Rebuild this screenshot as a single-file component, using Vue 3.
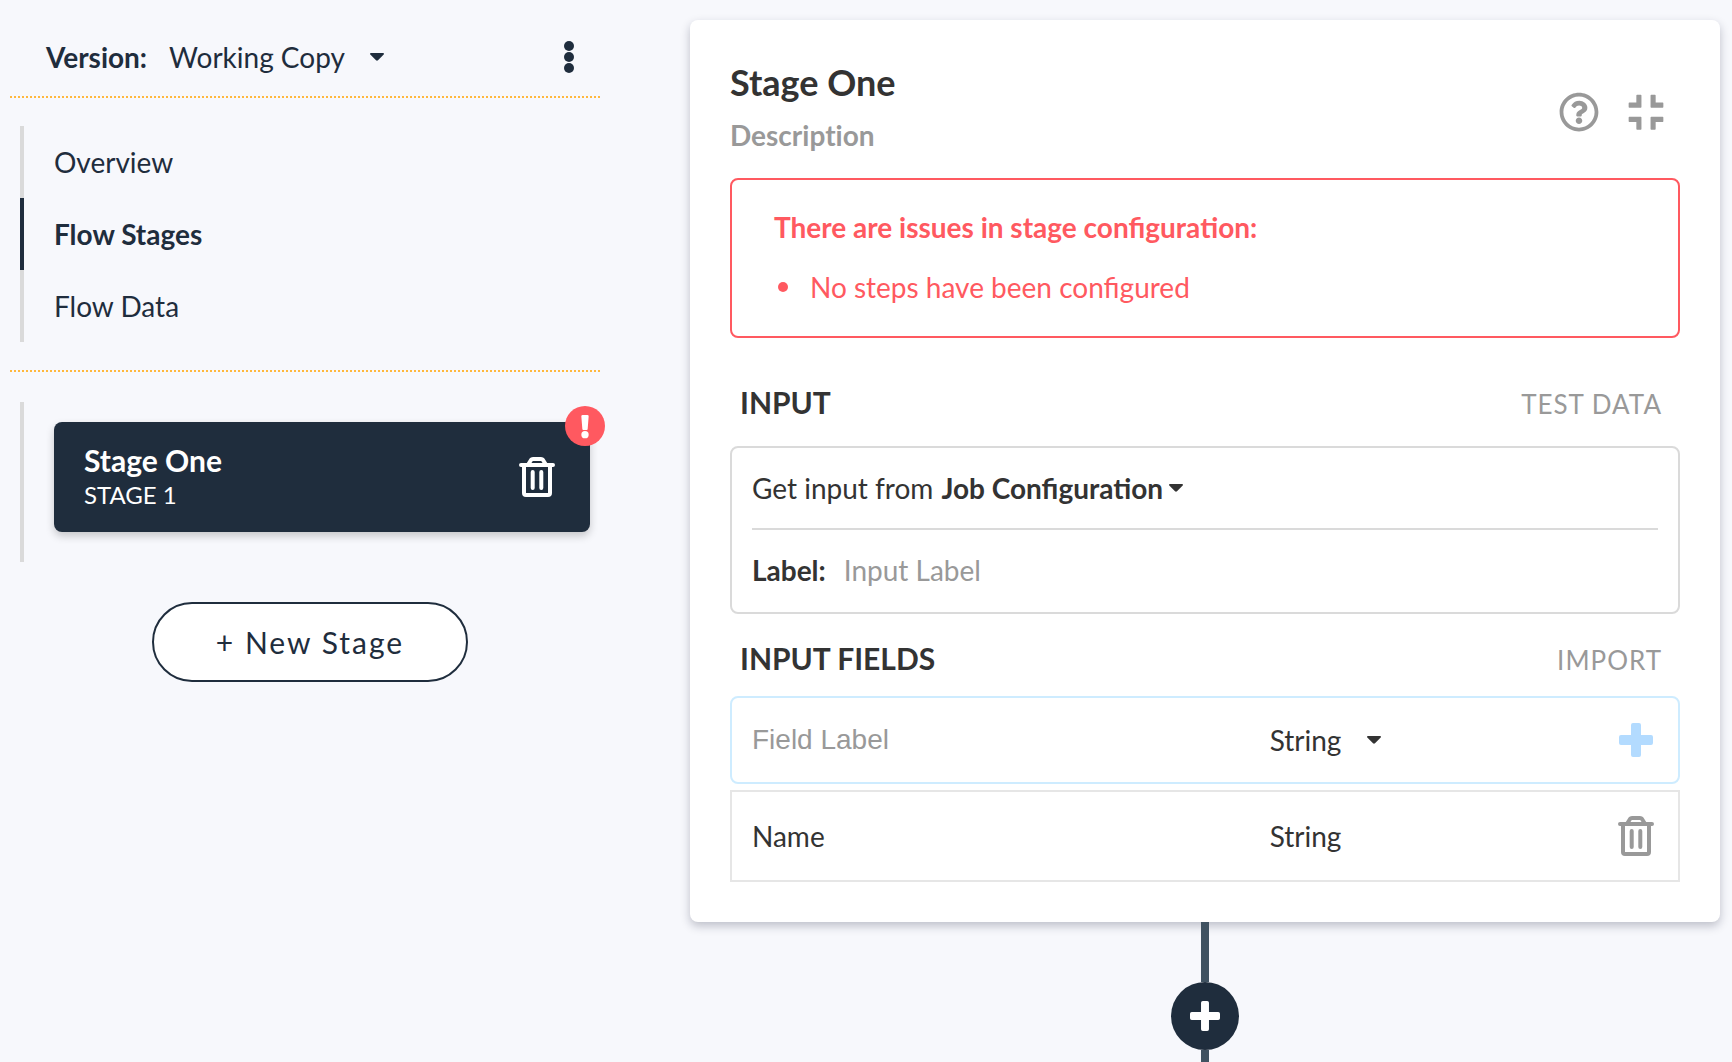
<script setup>
import { ref } from 'vue'

const version = ref('Working Copy')
const source = ref('Job Configuration')
const description = ref('')
const inputLabel = ref('')
const fieldLabel = ref('')
const fieldType = ref('String')

const sections = [
  { name: 'Overview', active: false },
  { name: 'Flow Stages', active: true },
  { name: 'Flow Data', active: false },
]
const issues = ['No steps have been configured']
const fields = [{ name: 'Name', type: 'String' }]
</script>

<template>
  <div class="page">
    <aside class="sidebar">
      <header class="version-bar">
        <label class="version-label" for="version">Version:</label>
        <span class="picker picker-wide">
          <select id="version" v-model="version">
            <option>Working Copy</option>
          </select>
          <svg class="caret" viewBox="0 0 14 8" aria-hidden="true"><path d="M1 0h12c1 0 1.300 1 .7 1.600l-5.700 5.700c-.6.600-1.400.6-2 0L.3 1.600C-.3 1 0 0 1 0z" /></svg>
        </span>
        <button class="icon-button more" type="button" aria-label="More options">
          <svg viewBox="0 0 10 32" width="10" height="32"><circle cx="5" cy="5" r="5" /><circle cx="5" cy="16" r="5" /><circle cx="5" cy="27" r="5" /></svg>
        </button>
      </header>

      <nav class="sections">
        <a v-for="s in sections" :key="s.name" href="#" :class="{ active: s.active }">{{ s.name }}</a>
      </nav>

      <div class="stages">
        <div class="stage-list">
          <div class="stage-item">
            <div class="stage-text">
              <strong>Stage One</strong>
              <span>STAGE 1</span>
            </div>
            <button class="icon-button" type="button" aria-label="Delete stage">
              <svg class="trash" viewBox="0 0 36 40"><path d="M2 8h32M9.500 7l2.500-4q.7-1 2-1h8q1.300 0 2 1l2.500 4M5 8v28q0 2 2 2h22q2 0 2-2V8M13.700 15v16M22.300 15v16" /></svg>
            </button>
            <svg class="badge" viewBox="0 0 120 120" aria-label="Stage has issues"><circle cx="60" cy="60" r="60" fill="#ff5960" /><path d="M53 27h14q4 0 4 4l-3 38q0 3-3 3H55q-3 0-3-3l-3-38q0-4 4-4z" fill="#fff" /><circle cx="60" cy="86" r="11" fill="#fff" /></svg>
          </div>
        </div>
        <button class="new-stage" type="button">+ New Stage</button>
      </div>
    </aside>

    <main class="canvas">
      <section class="card">
        <header class="card-head">
          <div class="card-titles">
            <h1>Stage One</h1>
            <input v-model="description" class="description" type="text" placeholder="Description" aria-label="Description" />
          </div>
          <div class="card-actions">
            <button class="icon-button" type="button" aria-label="Help">
              <svg viewBox="0 0 512 512" width="40" height="40"><path d="M256 8C119.043 8 8 119.083 8 256c0 136.997 111.043 248 248 248s248-111.003 248-248C504 119.083 392.957 8 256 8zm0 448c-110.532 0-200-89.431-200-200 0-110.495 89.472-200 200-200 110.491 0 200 89.471 200 200 0 110.530-89.431 200-200 200zm107.244-255.200c0 67.052-72.421 68.084-72.421 92.863V300c0 6.627-5.373 12-12 12h-45.647c-6.627 0-12-5.373-12-12v-8.659c0-35.745 27.100-50.034 47.579-61.516 17.561-9.845 28.324-16.541 28.324-29.579 0-17.246-21.999-28.693-39.784-28.693-23.189 0-33.894 10.977-48.942 29.969-4.057 5.120-11.460 6.071-16.666 2.124l-27.824-21.098c-5.107-3.872-6.251-11.066-2.644-16.363C184.846 131.491 214.940 112 261.794 112c49.071 0 101.450 38.304 101.450 88.800zM298 368c0 23.159-18.841 42-42 42s-42-18.841-42-42 18.841-42 42-42 42 18.841 42 42z" /></svg>
            </button>
            <button class="icon-button" type="button" aria-label="Collapse">
              <svg viewBox="0 0 40 40" width="40" height="40" stroke="currentColor" stroke-width="1.500" stroke-linejoin="round"><path d="M11.100 3.600h3.600v11.300H3.400v-3.600h7.700zM28.900 3.600h-3.600v11.300h11.300v-3.600h-7.700zM11.100 36.900h3.600V25.600H3.400v3.600h7.700zM28.900 36.900h-3.600V25.600h11.300v3.600h-7.700z" /></svg>
            </button>
          </div>
        </header>

        <div class="issues" role="alert">
          <h2>There are issues in stage configuration:</h2>
          <ul>
            <li v-for="issue in issues" :key="issue">{{ issue }}</li>
          </ul>
        </div>

        <div class="section-head">
          <h2>INPUT</h2>
          <button type="button">TEST DATA</button>
        </div>
        <div class="panel">
          <div class="panel-row source-row">
            <label for="source">Get input from</label>
            <span class="picker picker-tight">
              <select id="source" v-model="source">
                <option>Job Configuration</option>
              </select>
              <svg class="caret" viewBox="0 0 14 8" aria-hidden="true"><path d="M1 0h12c1 0 1.300 1 .7 1.600l-5.700 5.700c-.6.600-1.400.6-2 0L.3 1.600C-.3 1 0 0 1 0z" /></svg>
            </span>
          </div>
          <div class="panel-row label-row">
            <label for="input-label">Label:</label>
            <input id="input-label" v-model="inputLabel" type="text" placeholder="Input Label" />
          </div>
        </div>

        <div class="section-head fields-head">
          <h2>INPUT FIELDS</h2>
          <button type="button">IMPORT</button>
        </div>
        <form class="field-row field-new" @submit.prevent>
          <input v-model="fieldLabel" type="text" placeholder="Field Label" aria-label="Field Label" />
          <div class="field-type">
            <span class="picker picker-wide">
              <select v-model="fieldType" aria-label="Field type">
                <option>String</option>
              </select>
              <svg class="caret" viewBox="0 0 14 8" aria-hidden="true"><path d="M1 0h12c1 0 1.300 1 .7 1.600l-5.700 5.700c-.6.600-1.400.6-2 0L.3 1.600C-.3 1 0 0 1 0z" /></svg>
            </span>
            <button class="icon-button add" type="submit" aria-label="Add field">
              <svg viewBox="0 0 34 34" width="34" height="34"><path d="M14 0h6q2 0 2 2v10h10q2 0 2 2v6q0 2-2 2H22v10q0 2-2 2h-6q-2 0-2-2V22H2q-2 0-2-2v-6q0-2 2-2h10V2q0-2 2-2z" /></svg>
            </button>
          </div>
        </form>
        <div v-for="f in fields" :key="f.name" class="field-row">
          <span>{{ f.name }}</span>
          <div class="field-type">
            <span>{{ f.type }}</span>
            <button class="icon-button remove" type="button" aria-label="Delete field">
              <svg class="trash" viewBox="0 0 36 40"><path d="M2 8h32M9.500 7l2.500-4q.7-1 2-1h8q1.300 0 2 1l2.500 4M5 8v28q0 2 2 2h22q2 0 2-2V8M13.700 15v16M22.300 15v16" /></svg>
            </button>
          </div>
        </div>
      </section>

      <div class="connector"></div>
      <button class="add-step" type="button" aria-label="Add step">
        <svg viewBox="0 0 34 34" width="30" height="30"><path d="M14.500 0h5q2 0 2 2v10.500H32q2 0 2 2v5q0 2-2 2H21.500V32q0 2-2 2h-5q-2 0-2-2V21.500H2q-2 0-2-2v-5q0-2 2-2h10.500V2q0-2 2-2z" /></svg>
      </button>
      <div class="connector connector-end"></div>
    </main>
  </div>
</template>

<style>
body {
  margin: 0;
  background: #f7f8fc;
}
</style>

<style scoped>
.page {
  box-sizing: border-box;
  display: grid;
  grid-template-columns: minmax(0, 59fr) minmax(0, 103fr);
  column-gap: 90px;
  min-height: 100vh;
  padding: 0 12px 0 10px;
  background: #f7f8fc;
  color: #333;
  font-family: Lato, "Liberation Sans", sans-serif;
  font-size: 28px;
  line-height: 40px;
}

h1,
h2,
ul {
  margin: 0;
  padding: 0;
}

button,
input,
select {
  box-sizing: border-box;
  margin: 0;
  padding: 0;
  border: 0;
  background: none;
  color: inherit;
  font: inherit;
}

select {
  appearance: none;
  cursor: pointer;
}

button {
  cursor: pointer;
}

input {
  min-width: 0;
  outline: none;
}

input::placeholder {
  color: #999;
  opacity: 1;
}

.icon-button {
  display: flex;
  align-items: center;
  justify-content: center;
  flex: none;
  width: 44px;
  height: 44px;
}

svg {
  display: block;
  fill: currentColor;
}

.trash {
  width: 36px;
  height: 40px;
  fill: none;
  stroke: currentColor;
  stroke-width: 4;
  stroke-linecap: round;
  stroke-linejoin: round;
}

.picker {
  display: inline-flex;
  align-items: center;
}

.picker-wide {
  gap: 25px;
}

.picker-tight {
  gap: 6px;
  font-weight: 700;
}

.caret {
  width: 14px;
  height: 8px;
  pointer-events: none;
}

/* Sidebar */

.sidebar {
  color: #1f2d3d;
}

.version-bar {
  display: flex;
  align-items: center;
  height: 42px;
  padding: 36px 9px 18px 36px;
  border-bottom: 2px dotted #ffb83d;
}

.version-label {
  margin-right: 22px;
  font-weight: 700;
}

.more {
  margin-left: auto;
}

.sections {
  display: flex;
  flex-direction: column;
  padding: 28px 10px;
  border-bottom: 2px dotted #ffb83d;
}

.sections a {
  padding-left: 30px;
  border-left: 4px solid #dadada;
  color: inherit;
  line-height: 72px;
  text-decoration: none;
}

.sections a.active {
  border-color: #1f2d3d;
  font-weight: 700;
}

.stages {
  display: flex;
  flex-direction: column;
  align-items: center;
  gap: 40px;
  padding: 30px 0 40px 10px;
}

.stage-list {
  box-sizing: border-box;
  width: 100%;
  padding: 20px 10px 30px 30px;
  border-left: 4px solid #dadada;
}

.stage-item {
  position: relative;
  display: flex;
  align-items: center;
  justify-content: space-between;
  padding: 20px 31px 20px 30px;
  border-radius: 8px;
  background: #1f2d3d;
  box-shadow: 0 4px 8px rgba(0, 0, 0, 0.2);
  color: #fff;
}

.stage-text {
  display: flex;
  flex-direction: column;
  font-size: 24px;
  line-height: 34px;
}

.stage-text strong {
  font-size: 30px;
  line-height: 36px;
}

.badge {
  position: absolute;
  top: -16px;
  right: -15px;
  width: 40px;
  height: 40px;
}

.new-stage {
  height: 80px;
  padding: 0 62px;
  border: 2px solid #1f2d3d;
  border-radius: 40px;
  background: #fff;
  font-size: 30px;
  letter-spacing: 2px;
}

/* Stage card */

.canvas {
  display: flex;
  flex-direction: column;
  align-items: center;
  padding-top: 20px;
}

.card {
  box-sizing: border-box;
  width: 100%;
  padding: 40px;
  border-radius: 8px;
  background: #fff;
  box-shadow: 0 4px 10px rgba(20, 25, 50, 0.25);
}

.card-head {
  display: flex;
  align-items: flex-end;
  justify-content: space-between;
  margin-bottom: 24px;
}

.card-titles {
  display: flex;
  flex: 1;
  flex-direction: column;
  gap: 12px;
}

h1 {
  font-size: 36px;
  line-height: 44px;
}

.description {
  height: 38px;
  font-weight: 700;
  font-variant-ligatures: none;
}

.card-actions {
  display: flex;
  gap: 23px;
  padding: 0 12px 20px 0;
  color: #999;
}

.issues {
  padding: 28px 42px 30px;
  border: 2px solid #ff5960;
  border-radius: 8px;
  color: #ff5960;
  line-height: 38px;
}

.issues h2 {
  margin-bottom: 22px;
  font-size: 28px;
}

.issues ul {
  list-style: none;
}

.issues li {
  display: flex;
  align-items: center;
  gap: 22px;
  padding-left: 4px;
}

.issues li::before {
  width: 10px;
  height: 10px;
  border-radius: 50%;
  background: currentColor;
  content: "";
}

.section-head {
  display: flex;
  align-items: baseline;
  justify-content: space-between;
  padding: 44px 18px 24px 10px;
}

.fields-head {
  padding-top: 24px;
  padding-bottom: 18px;
}

.section-head h2 {
  font-size: 30px;
  line-height: 40px;
}

.section-head button {
  color: #999;
  font-size: 26px;
  line-height: 32px;
  letter-spacing: 1px;
}

.panel {
  padding: 0 20px 2px;
  border: 2px solid #dadada;
  border-radius: 8px;
}

.panel-row {
  display: flex;
  align-items: center;
  height: 80px;
}

.source-row {
  gap: 8px;
  border-bottom: 2px solid #dadada;
}

.label-row {
  gap: 18px;
}

.label-row label {
  font-weight: 700;
}

.label-row input {
  flex: 1;
}

.field-row {
  display: grid;
  grid-template-columns: minmax(0, 4fr) minmax(0, 3fr);
  align-items: center;
  height: 88px;
  padding: 0 20px;
  border: 2px solid #e6e6e6;
}

.field-new {
  height: 84px;
  margin-bottom: 6px;
  border-color: #ceecff;
  border-radius: 8px;
}

.field-new input {
  font-family: "Liberation Sans", Arial, sans-serif;
}

.field-type {
  display: flex;
  align-items: center;
  justify-content: space-between;
}

.add {
  color: #b3dbff;
}

.remove {
  color: #999;
}

/* Flow connectors */

.connector {
  width: 8px;
  height: 60px;
  background: #405261;
}

.connector-end {
  flex: 1;
  height: auto;
  min-height: 12px;
}

.add-step {
  display: flex;
  align-items: center;
  justify-content: center;
  flex: none;
  width: 68px;
  height: 68px;
  border-radius: 50%;
  background: #1f2d3d;
  color: #fff;
}
</style>
